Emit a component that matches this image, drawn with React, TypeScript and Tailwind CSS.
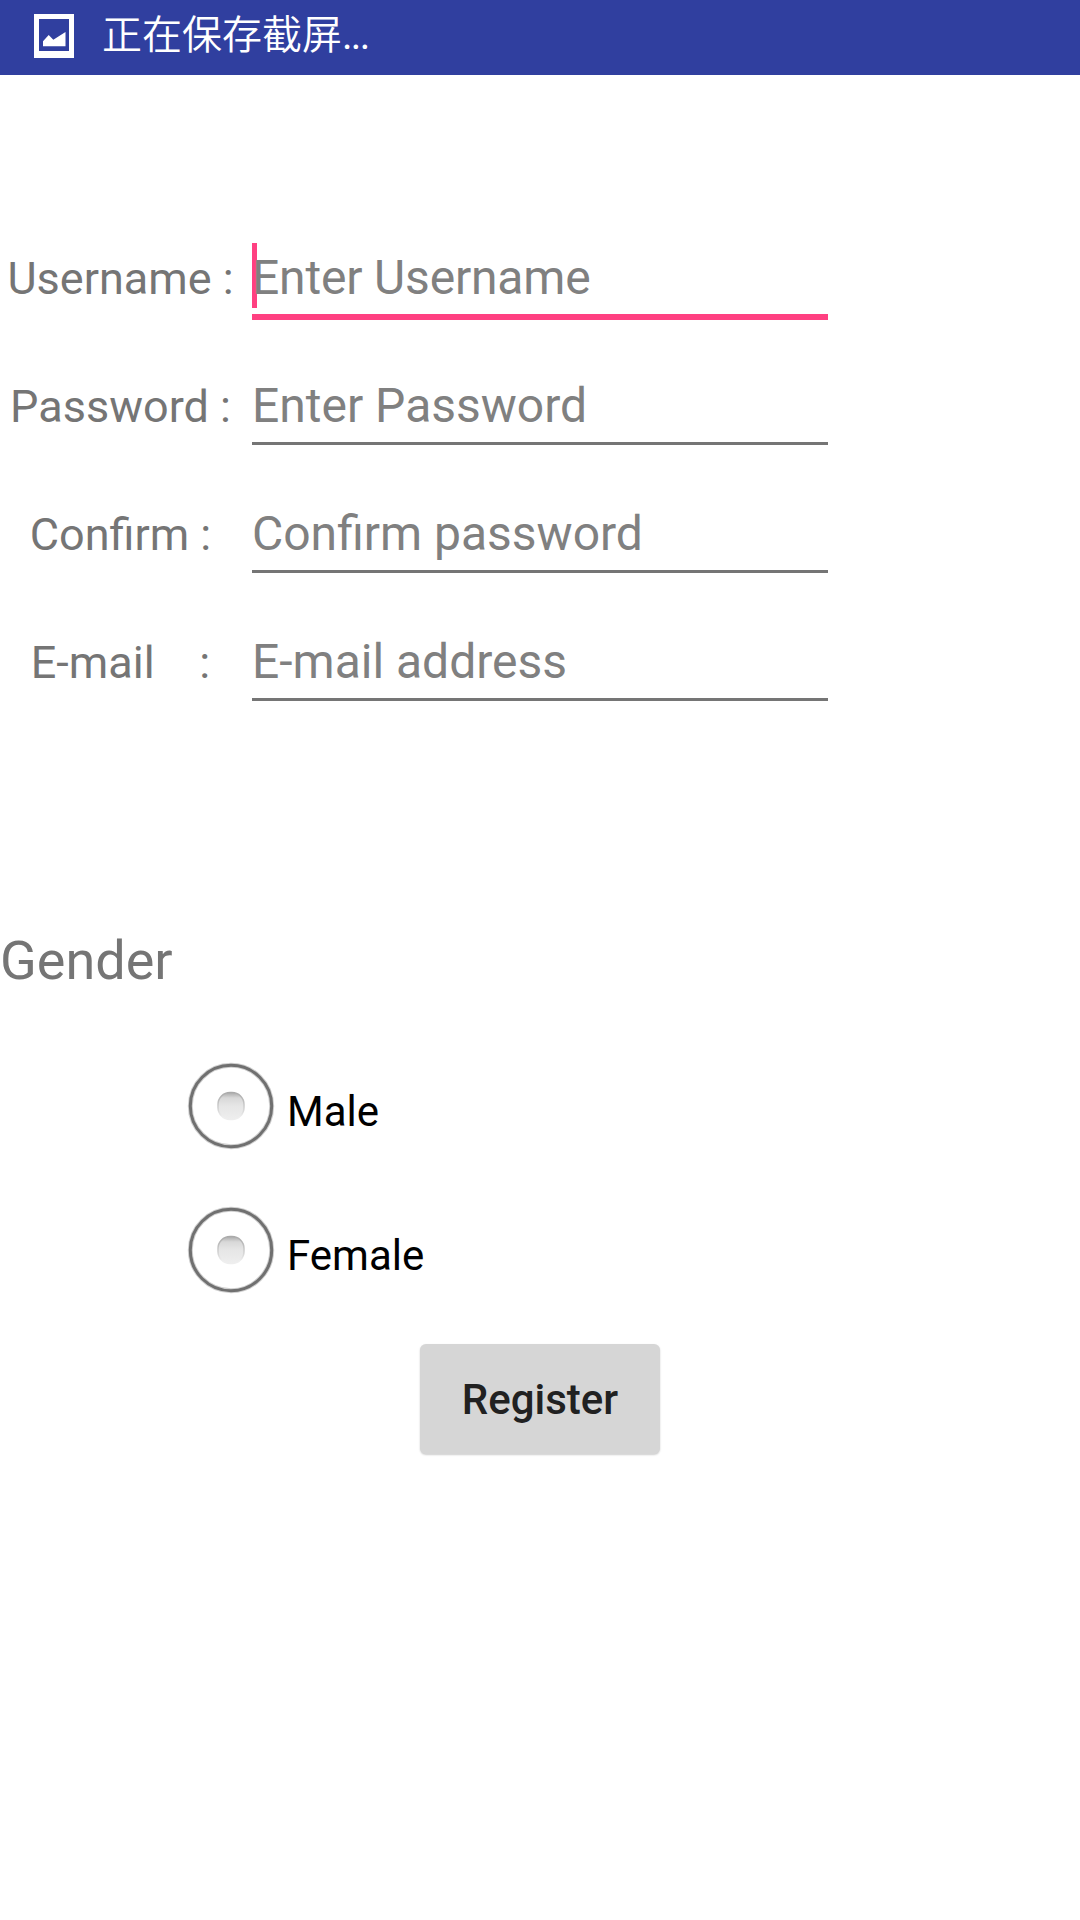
const fields = [
  { label: 'Username :', hint: 'Enter Username', focused: true },
  { label: 'Password :', hint: 'Enter Password' },
  { label: 'Confirm :', hint: 'Confirm password' },
  { label: 'E-mail    :', hint: 'E-mail address' },
];

function PictureIcon() {
  return (
    <svg width="40" height="44" viewBox="0 0 40 44" className="shrink-0">
      <path fill="#fff" fillRule="evenodd" d="M0 0H40V44H0ZM5 5V37H35V5Z" />
      <path fill="#fff" d="M9 32.300V27.300L14.700 21L19.300 25.800L31.500 18V32.300Z" />
    </svg>
  );
}

function RadioIcon() {
  return (
    <svg width="96" height="96" viewBox="0 0 96 96" className="shrink-0">
      <defs>
        <linearGradient id="dot" x1="0" y1="0" x2="0" y2="1">
          <stop offset="0" stopColor="#aaaaaa" />
          <stop offset="0.2" stopColor="#d8d8d8" />
          <stop offset="0.5" stopColor="#e6e6e6" />
          <stop offset="1" stopColor="#eeeeee" />
        </linearGradient>
        <linearGradient id="rim" x1="0" y1="0" x2="0" y2="1">
          <stop offset="0" stopColor="#aaaaaa" />
          <stop offset="0.6" stopColor="#d2d2d2" />
          <stop offset="0.9" stopColor="#eeeeee" />
        </linearGradient>
      </defs>
      <circle cx="48" cy="48" r="40.700" fill="none" stroke="#d0d0d0" strokeWidth="5" />
      <circle cx="48" cy="48" r="40.700" fill="none" stroke="#707070" strokeWidth="3" />
      <rect x="35" y="34.500" width="26" height="27" rx="12" fill="url(#dot)" stroke="url(#rim)" strokeWidth="1.500" />
    </svg>
  );
}

export default function App() {
  return (
    <div className="flex h-[1920px] w-[1080px] flex-col overflow-hidden bg-white font-['Roboto','Noto_Sans_CJK_SC',sans-serif] text-[#757575]">
      <header className="flex h-[75px] shrink-0 items-start bg-[#303f9f] pl-[34px] pt-[14px] text-white">
        <PictureIcon />
        <div className="-mt-[12px] ml-[28px] font-['Noto_Sans_CJK_SC',sans-serif] text-[40px] font-[350] leading-[60px]">
          正在保存截屏<span className="font-['Roboto'] font-normal tracking-[-1.7px]">...</span>
        </div>
      </header>

      <form className="mt-[174px] flex flex-col">
        {fields.map((f) => (
          <div key={f.label} className="flex h-[128px] items-baseline">
            <label className="w-[240px] whitespace-pre pl-px text-center text-[45px] leading-[53px]">{f.label}</label>
            <div
              className={
                f.focused
                  ? 'relative ml-3 w-[576px] border-b-[6px] border-[#ff4081] pb-2 text-[48px] leading-[57px] tracking-[-0.17px] text-[#808080]'
                  : 'relative ml-3 w-[576px] border-b-[3px] border-[#757575] pb-2 text-[48px] leading-[57px] text-[#808080]'
              }
            >
              {f.focused && <span className="absolute -top-[6px] left-0 h-[65px] w-[5px] bg-[#ff4081]" />}
              <span className="relative">{f.hint}</span>
            </div>
          </div>
        ))}
      </form>

      <h2 className="mt-[168px] text-[54px] leading-[64px]">Gender</h2>

      <div className="mt-[65px] flex flex-col gap-12 pl-[183px] text-[42px] text-black">
        {['Male', 'Female'].map((g) => (
          <label key={g} className="flex h-24 items-center">
            <RadioIcon />
            <span className="ml-2 mt-[11px] leading-[50px]">{g}</span>
          </label>
        ))}
      </div>

      <button className="mt-[46px] h-[110px] w-[240px] self-center rounded-[6px] bg-[#d6d6d6] pt-[2px] text-[42px] font-medium leading-[50px] text-[#212121] shadow-[0_1px_2px_rgba(0,0,0,0.2)]">
        Register
      </button>
    </div>
  );
}
